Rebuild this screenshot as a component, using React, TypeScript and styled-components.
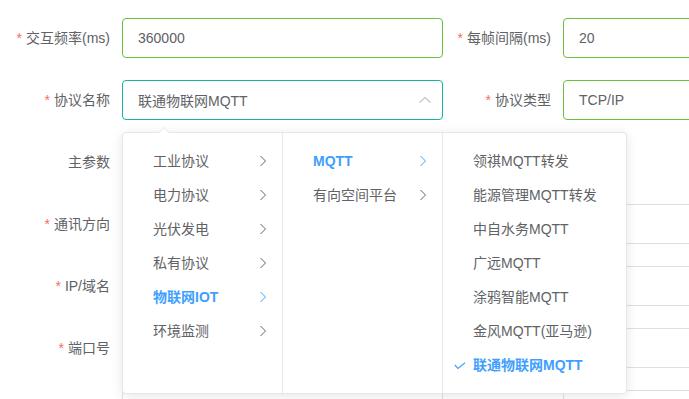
import React from 'react';
import styled, { createGlobalStyle } from 'styled-components';

type Field = {
  label: string;
  required?: boolean;
  value?: string;
  kind?: 'input' | 'select' | 'none';
  status?: 'success' | 'focus' | 'normal';
};

type Row = { left: Field; right?: Field };

// rows 4-7 on the right sit behind the open cascader, so their labels are left blank
const rows: Row[] = [
  {
    left: { label: '交互频率(ms)', required: true, value: '360000', status: 'success' },
    right: { label: '每帧间隔(ms)', required: true, value: '20', status: 'success' },
  },
  {
    left: { label: '协议名称', required: true, value: '联通物联网MQTT', kind: 'select', status: 'focus' },
    right: { label: '协议类型', required: true, value: 'TCP/IP', status: 'success' },
  },
  { left: { label: '主参数', kind: 'none' } },
  {
    left: { label: '通讯方向', required: true, value: '', kind: 'select' },
    right: { label: '', value: '' },
  },
  {
    left: { label: 'IP/域名', required: true, value: '' },
    right: { label: '', value: '' },
  },
  {
    left: { label: '端口号', required: true, value: '' },
    right: { label: '', value: '' },
  },
  {
    left: { label: '', value: '' },
    right: { label: '', value: '' },
  },
];

const level1 = ['工业协议', '电力协议', '光伏发电', '私有协议', '物联网IOT', '环境监测'];
const level2 = ['MQTT', '有向空间平台'];
const level3 = [
  '领祺MQTT转发',
  '能源管理MQTT转发',
  '中自水务MQTT',
  '广远MQTT',
  '涂鸦智能MQTT',
  '金风MQTT(亚马逊)',
  '联通物联网MQTT',
];

function ChevronRight() {
  return (
    <svg width="14" height="14" viewBox="0 0 14 14" fill="none">
      <path d="M4.5 2 L9.5 7 L4.5 12" stroke="currentColor" strokeWidth="1" />
    </svg>
  );
}

function ChevronUp() {
  return (
    <svg width="12" height="8" viewBox="0 0 12 8" fill="none">
      <path d="M0.5 6.5 L6 1.5 L11.5 6.5" stroke="currentColor" strokeWidth="1.2" />
    </svg>
  );
}

function Check() {
  return (
    <svg width="12" height="8" viewBox="0 0 12 8" fill="none">
      <path d="M0.8 3 L4 6.4 L11 0.8" stroke="currentColor" strokeWidth="1.1" />
    </svg>
  );
}

function Cascader() {
  return (
    <Panel>
      <Arrow />
      <Menu $width={160}>
        {level1.map((t) => (
          <Node key={t} $active={t === '物联网IOT'}>
            {t}
            <NodeArrow>
              <ChevronRight />
            </NodeArrow>
          </Node>
        ))}
      </Menu>
      <Menu $width={160}>
        {level2.map((t) => (
          <Node key={t} $active={t === 'MQTT'}>
            {t}
            <NodeArrow>
              <ChevronRight />
            </NodeArrow>
          </Node>
        ))}
      </Menu>
      <Menu $width={183} $last>
        {level3.map((t) => {
          const checked = t === '联通物联网MQTT';
          return (
            <Node key={t} $active={checked}>
              {checked && (
                <NodeCheck>
                  <Check />
                </NodeCheck>
              )}
              {t}
            </Node>
          );
        })}
      </Menu>
    </Panel>
  );
}

function FieldItem({ field, labelWidth }: { field: Field; labelWidth: number }) {
  const kind = field.kind || 'input';
  return (
    <>
      <Label $width={labelWidth}>
        {field.required && field.label && <Star>*</Star>}
        {field.label}
      </Label>
      {kind === 'none' ? (
        <div />
      ) : (
        <Control>
          <InputBox $status={field.status || 'normal'}>
            <span>{field.value}</span>
            {kind === 'select' && (
              <SelectArrow $open={field.status === 'focus'}>
                <ChevronUp />
              </SelectArrow>
            )}
          </InputBox>
          {field.status === 'focus' && <Cascader />}
        </Control>
      )}
    </>
  );
}

export default function App() {
  return (
    <>
      <GlobalStyle />
      <Form>
        {rows.map((r, i) => (
          <FormRow key={i}>
            <FieldItem field={r.left} labelWidth={122} />
            {r.right ? <FieldItem field={r.right} labelWidth={120} /> : <><div /><div /></>}
          </FormRow>
        ))}
      </Form>
    </>
  );
}

const GlobalStyle = createGlobalStyle`
  html, body {
    margin: 0;
    padding: 0;
    background: #ffffff;
    overflow: hidden;
  }
  body {
    font-family: 'Liberation Sans', 'Noto Sans CJK SC', sans-serif;
    font-size: 14px;
    color: #606266;
  }
`;

const Form = styled.div`
  display: flex;
  flex-direction: column;
  gap: 22px;
  padding-top: 18px;
  width: 689px;
  height: 399px;
  overflow: hidden;
`;

const FormRow = styled.div`
  display: grid;
  grid-template-columns: 122px 321px 120px 320px;
  height: 40px;
  flex-shrink: 0;
`;

const Label = styled.div<{ $width: number }>`
  width: ${(p) => p.$width}px;
  box-sizing: border-box;
  padding-right: 12px;
  display: flex;
  align-items: center;
  justify-content: flex-end;
  line-height: 40px;
  font-size: 14px;
  color: #606266;
  white-space: nowrap;
`;

const Star = styled.span`
  color: #f56c6c;
  margin-right: 4px;
`;

const Control = styled.div`
  position: relative;
`;

const borderColors = {
  success: '#67c23a',
  focus: '#13b5a0',
  normal: '#dcdfe6',
};

const InputBox = styled.div<{ $status: 'success' | 'focus' | 'normal' }>`
  box-sizing: border-box;
  height: 40px;
  display: flex;
  align-items: center;
  justify-content: space-between;
  padding: 0 11px 0 15px;
  border: 1px solid ${(p) => borderColors[p.$status]};
  border-radius: 4px;
  background: #fff;
  font-size: 14px;
  color: #606266;
`;

const SelectArrow = styled.span<{ $open: boolean }>`
  display: flex;
  color: #c0c4cc;
  transform: ${(p) => (p.$open ? 'none' : 'rotate(180deg)')};
`;

const Panel = styled.div`
  position: absolute;
  top: 52px;
  left: 0;
  z-index: 10;
  display: flex;
  height: 262px;
  box-sizing: border-box;
  background: #fff;
  border: 1px solid #e4e7ed;
  border-radius: 4px;
  box-shadow: 0 2px 12px 0 rgba(0, 0, 0, 0.1);
`;

const Arrow = styled.div`
  position: absolute;
  top: -6px;
  left: 35px;
  width: 0;
  height: 0;
  border-left: 6px solid transparent;
  border-right: 6px solid transparent;
  border-bottom: 6px solid #e4e7ed;

  &::after {
    content: '';
    position: absolute;
    top: 1px;
    left: -6px;
    border-left: 6px solid transparent;
    border-right: 6px solid transparent;
    border-bottom: 6px solid #fff;
  }
`;

const Menu = styled.ul<{ $width: number; $last?: boolean }>`
  list-style: none;
  margin: 0;
  padding: 11px 0 0;
  width: ${(p) => p.$width}px;
  box-sizing: border-box;
  border-right: ${(p) => (p.$last ? 'none' : '1px solid #e4e7ed')};
`;

const Node = styled.li<{ $active?: boolean }>`
  position: relative;
  height: 34px;
  line-height: 34px;
  padding: 0 30px;
  font-size: 14px;
  white-space: nowrap;
  color: ${(p) => (p.$active ? '#409eff' : '#606266')};
  font-weight: ${(p) => (p.$active ? 700 : 400)};
`;

const NodeArrow = styled.span`
  position: absolute;
  right: 12px;
  top: 10px;
  display: flex;
`;

const NodeCheck = styled.span`
  position: absolute;
  left: 11px;
  top: 14px;
  display: flex;
`;
